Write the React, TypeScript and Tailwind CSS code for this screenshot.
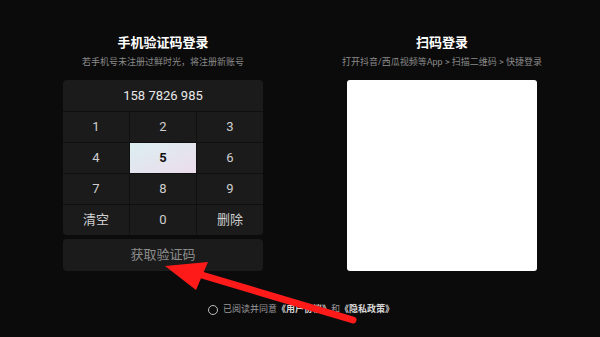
export default function App() {
  const keys = ["1", "2", "3", "4", "5", "6", "7", "8", "9", "清空", "0", "删除"];
  return (
    <div
      className="relative w-[600px] h-[337px] bg-[#0b0b0b] overflow-hidden text-white"
      style={{ fontFamily: "Roboto, 'Noto Sans CJK SC', sans-serif" }}
    >
      <div className="flex justify-center gap-[84px] pt-[34px]">
        {/* phone login */}
        <div className="w-[200px] flex flex-col items-center">
          <div className="text-[13px] leading-[17px] font-bold text-white">手机验证码登录</div>
          <div className="mt-[5px] text-[9px] leading-[12px] text-[#8a8a8a] whitespace-nowrap">
            若手机号未注册过鲜时光，将注册新账号
          </div>
          <div className="mt-[12px] w-[200px] rounded-[4px] bg-[#101010] overflow-hidden">
            <div className="h-[31px] bg-[#1b1b1b] flex items-center justify-center text-[13px] text-[#e8e8e8]">
              158 7826 985
            </div>
            <div className="grid grid-cols-3 gap-px pt-px">
              {keys.map((k) => (
                <div
                  key={k}
                  className={
                    k === "5"
                      ? "h-[30px] flex items-center justify-center text-[13px] font-bold text-[#111] bg-gradient-to-br from-[#dbeff1] to-[#ecdcec]"
                      : "h-[30px] flex items-center justify-center text-[13px] text-[#cfcfcf] bg-[#1b1b1b]"
                  }
                >
                  {k}
                </div>
              ))}
            </div>
          </div>
          <div className="mt-[4px] w-[200px] h-[32px] rounded-[4px] bg-[#1b1b1b] flex items-center justify-center text-[13px] text-[#8c8c8c]">
            获取验证码
          </div>
        </div>

        {/* qr login */}
        <div className="w-[190px] flex flex-col items-center">
          <div className="text-[13px] leading-[17px] font-bold text-white">扫码登录</div>
          <div className="mt-[5px] text-[9px] leading-[12px] text-[#8a8a8a] whitespace-nowrap">
            打开抖音/西瓜视频等App &gt; 扫描二维码 &gt; 快捷登录
          </div>
          <div className="mt-[12px] w-[190px] h-[191px] rounded-[3px] bg-white" />
        </div>
      </div>

      <div className="mt-[32px] flex items-center justify-center gap-[5px] text-[9px] text-[#9a9a9a] pl-[2px]">
        <span className="w-[10px] h-[10px] rounded-full border border-[#bdbdbd]" />
        <span>
          已阅读并同意<span className="font-bold text-[#d8d8d8]">《用户协议》</span>和
          <span className="font-bold text-[#d8d8d8]">《隐私政策》</span>
        </span>
      </div>

      {/* annotation arrow */}
      <svg className="absolute left-0 top-0" width="600" height="337" viewBox="0 0 600 337">
        <line x1="353" y1="320" x2="195" y2="273" stroke="#ff1a1a" strokeWidth="7" strokeLinecap="round" />
        <polygon points="165,266 208,262 196,290" fill="#ff1a1a" />
      </svg>
    </div>
  );
}
